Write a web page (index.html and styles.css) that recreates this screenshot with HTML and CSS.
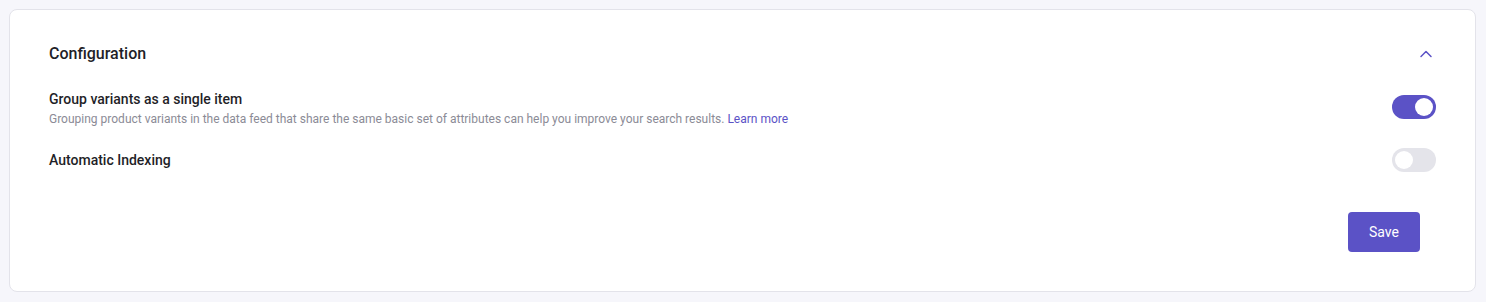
FILE: index.html
```html
<!DOCTYPE html>
<html lang="en">
<head>
    <meta charset="UTF-8">
    <meta name="viewport" content="width=device-width, initial-scale=1.0">
    <title>Configuration</title>
    <link rel="stylesheet" href="styles.css">
</head>
<body>
    <div class="card">
        <div class="card-header">
            <h2>Configuration</h2>
            <svg class="chevron" width="20" height="20" viewBox="0 0 20 20" fill="none">
                <path d="M5 12.5 L10 7.5 L15 12.5" stroke="#5b52c6" stroke-width="1.5" stroke-linecap="round" stroke-linejoin="round"/>
            </svg>
        </div>
        <div class="setting">
            <div class="setting-text">
                <div class="setting-title">Group variants as a single item</div>
                <div class="setting-desc">Grouping product variants in the data feed that share the same basic set of attributes can help you improve your search results. <a href="#">Learn more</a></div>
            </div>
            <div class="toggle on raised"><span class="knob"></span></div>
        </div>
        <div class="setting">
            <div class="setting-text">
                <div class="setting-title">Automatic Indexing</div>
            </div>
            <div class="toggle"><span class="knob"></span></div>
        </div>
        <div class="card-footer">
            <button class="save-btn">Save</button>
        </div>
    </div>
</body>
</html>
```

FILE: styles.css
```css
body {
    font-family: Roboto, "Liberation Sans", sans-serif;
    margin: 0;
    padding: 9px 10px 10px 9px;
    background-color: #f6f6fb;
    color: #1f1f28;
}
.card {
    background-color: #ffffff;
    border: 1px solid #e3e3ea;
    border-radius: 8px;
    padding: 32px 39px 39px 39px;
}
.card-header {
    display: flex;
    align-items: center;
    justify-content: space-between;
    height: 24px;
    margin-bottom: 23px;
}
.card-header h2 {
    margin: 0;
    font-size: 16px;
    font-weight: 500;
    line-height: 24px;
}
.chevron {
    display: block;
}
.setting {
    display: flex;
    align-items: center;
    justify-content: space-between;
    margin-bottom: 21px;
}
.setting-title {
    font-size: 14px;
    font-weight: 500;
    line-height: 20px;
}
.setting-desc {
    font-size: 12px;
    line-height: 16px;
    margin-top: 2px;
    color: #8b8b96;
}
.setting-desc a {
    color: #5b52c6;
    text-decoration: none;
}
.toggle {
    width: 44px;
    height: 24px;
    border-radius: 12px;
    background-color: #e4e4ea;
    display: flex;
    align-items: center;
    padding: 0 3px;
    box-sizing: border-box;
    flex-shrink: 0;
}
.toggle.on {
    background-color: #5b52c6;
    justify-content: flex-end;
}
.toggle.raised {
    margin-bottom: 2px;
}
.knob {
    width: 18px;
    height: 18px;
    border-radius: 50%;
    background-color: #ffffff;
}
.card-footer {
    display: flex;
    justify-content: flex-end;
    padding-top: 19px;
}
.save-btn {
    width: 72px;
    height: 40px;
    margin-right: 16px;
    border: none;
    border-radius: 4px;
    background-color: #5b52c6;
    color: #ffffff;
    font-family: Roboto, "Liberation Sans", sans-serif;
    font-size: 14px;
    cursor: pointer;
}
```
